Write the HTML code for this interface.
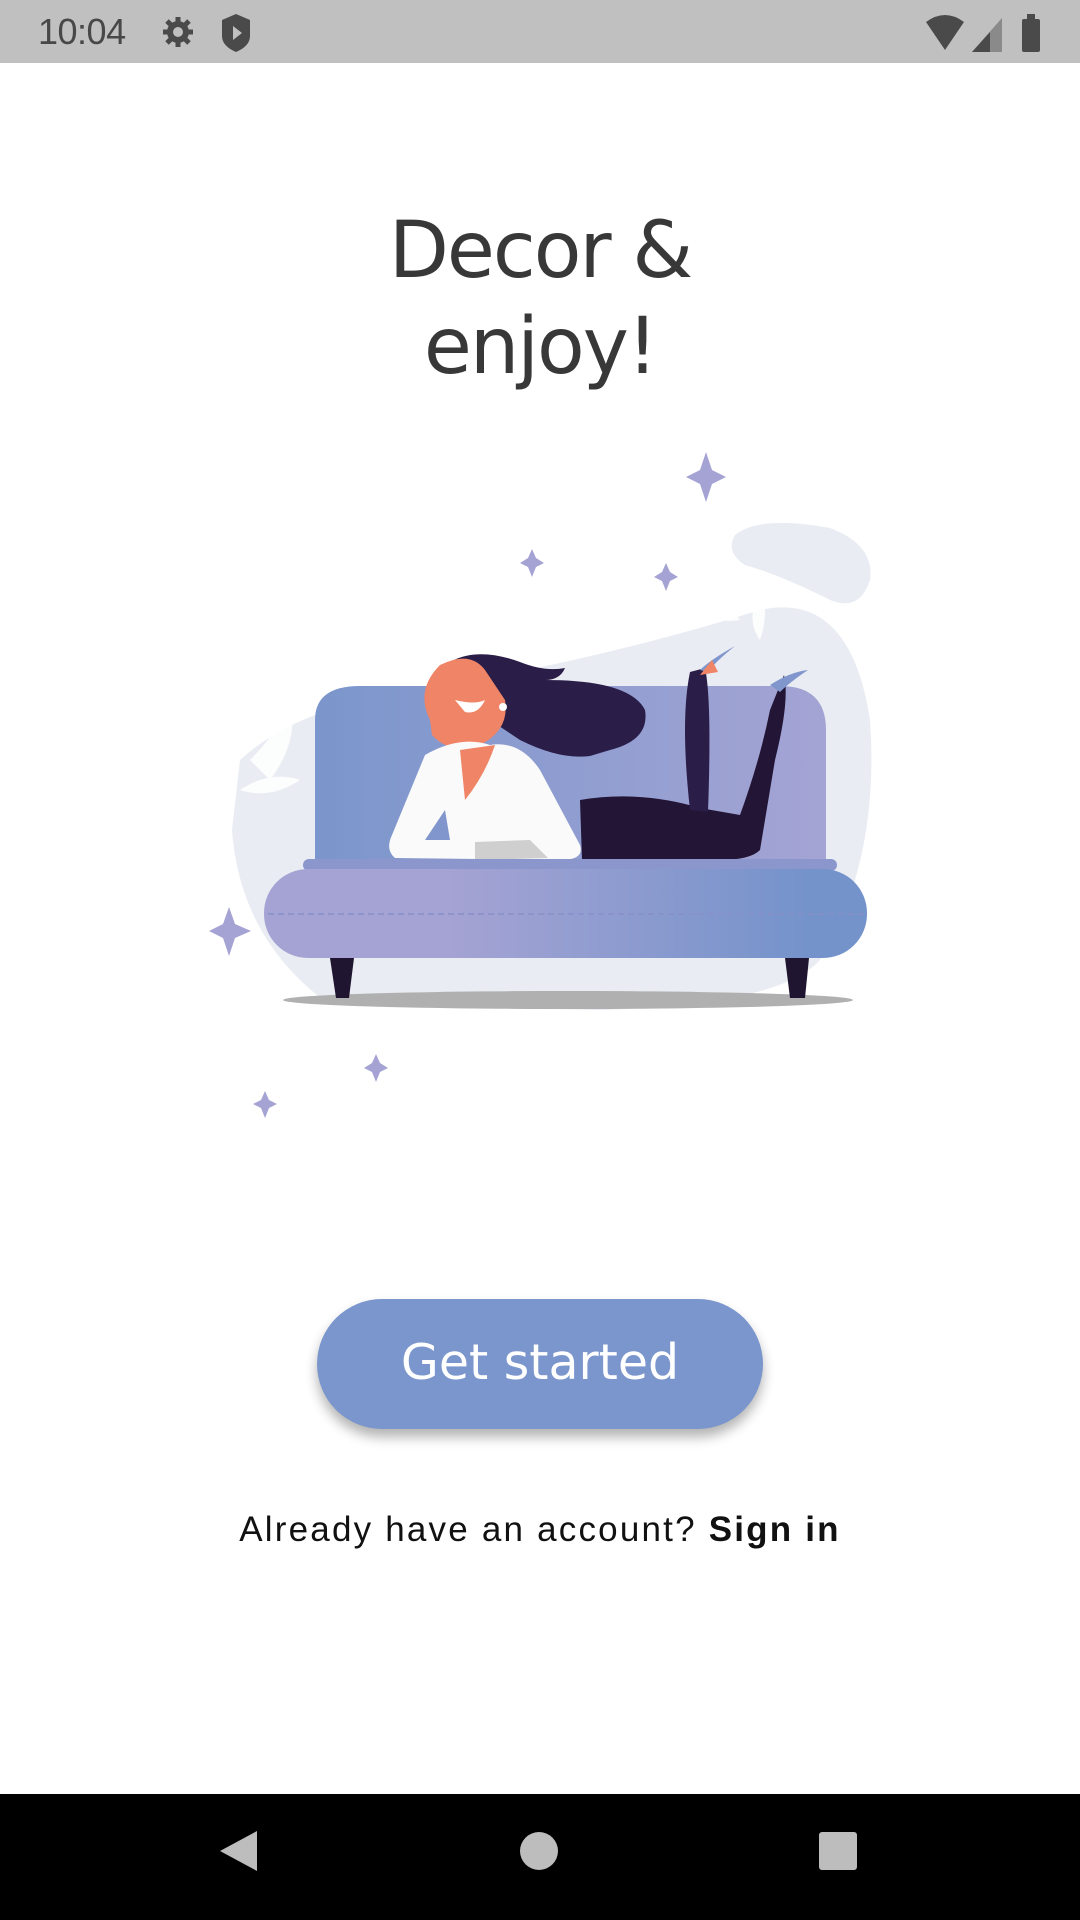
<!DOCTYPE html>
<html><head><meta charset="utf-8"><style>
html,body{margin:0;padding:0;width:1080px;height:1920px;background:#fff;overflow:hidden;position:relative;font-family:"Liberation Sans",sans-serif}
.sb{position:absolute;left:0;top:0;width:1080px;height:63px;background:#c0c0c0}
.time{position:absolute;left:38px;top:11px;font-size:36px;color:#484848;font-family:"Liberation Sans",sans-serif;letter-spacing:-0.5px}
.title{position:absolute;left:0;width:1080px;top:203px;text-align:center;font-family:"DejaVu Sans",sans-serif;font-size:78px;line-height:96px;color:#383838;letter-spacing:-2px}
.btn{position:absolute;left:317px;top:1299px;width:446px;height:130px;border-radius:65px;background:#7b96cc;box-shadow:0 8px 12px rgba(0,0,0,.3);color:#fff;font-family:"DejaVu Sans",sans-serif;font-size:49px;text-align:center;line-height:128px}
.acc{position:absolute;left:0;width:1080px;top:1510px;text-align:center;font-size:35px;letter-spacing:2.2px;color:#111}
.nav{position:absolute;left:0;top:1794px;width:1080px;height:126px;background:#000}
</style></head><body>
<div class="sb"><div class="time">10:04</div>
<svg width="1080" height="63" style="position:absolute;left:0;top:0">
<g fill="#4a4a4a">
<circle cx="178" cy="32" r="11"/>
<g stroke="#4a4a4a" stroke-width="5"><line x1="178" y1="17" x2="178" y2="47"/><line x1="163" y1="32" x2="193" y2="32"/><line x1="167" y1="21" x2="189" y2="43"/><line x1="189" y1="21" x2="167" y2="43"/></g>
<circle cx="178" cy="32" r="5" fill="#c0c0c0"/>
<path d="M222 20 L236 14 L250 20 L250 36 Q250 46 236 52 Q222 46 222 36 Z"/>
<path d="M233 26 L242 33 L233 40 Z" fill="#c0c0c0"/>
<path d="M926 22 Q945 8 964 22 L945 50 Z"/>
<path d="M972 52 L1002 18 L1002 52 Z" fill="#8a8a8a"/>
<path d="M972 52 L990 32 L990 52 Z"/>
<rect x="1022" y="19" width="18" height="33" rx="2"/><rect x="1027" y="14" width="8" height="6"/>
</g></svg></div>

<div class="title">Decor &amp;<br>enjoy!</div>

<svg width="1080" height="1920" style="position:absolute;left:0;top:0">
<defs>
<linearGradient id="bk" x1="0" x2="1"><stop offset="0" stop-color="#7b96cc"/><stop offset="1" stop-color="#a4a4d4"/></linearGradient>
<linearGradient id="st" x1="0" x2="1" y1="0" y2="0"><stop offset="0.3" stop-color="#a5a3d3"/><stop offset="0.9" stop-color="#7593cb"/></linearGradient>
</defs>
<path d="M240 760 Q300 705 420 690 Q600 660 760 610 Q850 590 870 720 Q880 860 820 960 Q780 1005 600 1010 L330 1005 Q240 940 232 830 Z" fill="#e9ecf2"/>
<path d="M735 535 Q760 515 830 528 Q875 545 870 580 Q860 612 830 600 Q780 575 745 565 Q725 552 735 535Z" fill="#e9ecf2"/>
<g fill="#fff" opacity=".9">
<path d="M250 760 Q280 730 290 700 Q300 740 270 780Z"/><path d="M240 790 Q270 770 300 780 Q270 800 240 790Z"/><path d="M250 730 Q270 710 285 720 Q265 740 250 730Z"/>
<path d="M690 600 Q720 590 740 620 Q710 625 690 600Z"/><path d="M760 640 Q770 610 760 590 Q745 620 760 640Z"/>
</g>
<g fill="#a5a3d3">
<path d="M706 452 L712 470 L726 477 L712 484 L706 502 L700 484 L686 477 L700 470Z"/>
<path d="M532 549 L536 558 L544 563 L536 567 L532 577 L528 567 L520 563 L528 558Z"/>
<path d="M666 563 L670 572 L678 577 L670 581 L666 591 L662 581 L654 577 L662 572Z"/>
<path d="M229 907 L235 924 L251 931 L235 938 L229 956 L223 938 L209 931 L223 924Z"/>
<path d="M376 1054 L380 1063 L388 1068 L380 1072 L376 1082 L372 1072 L364 1068 L372 1063Z"/>
<path d="M265 1091 L269 1100 L277 1104 L269 1108 L265 1118 L261 1108 L253 1104 L261 1100Z"/>
</g>
<ellipse cx="568" cy="1000" rx="285" ry="9" fill="#b0b0b0"/>
<path d="M330 958 L354 958 L349 998 L336 998Z" fill="#201530"/>
<path d="M785 958 L809 958 L805 998 L790 998Z" fill="#201530"/>
<path d="M315 720 Q315 686 360 686 L780 686 Q826 686 826 730 L826 863 L315 863Z" fill="url(#bk)"/>
<path d="M430 680 Q460 640 520 662 Q545 672 565 668 Q560 680 545 680 Q630 680 645 710 Q650 740 610 750 L590 756 Q560 760 520 740 Z" fill="#2a1e48"/>
<path d="M430 720 Q415 690 440 665 Q470 650 485 670 L505 700 Q510 730 480 745 Q450 755 432 735Z" fill="#f08466"/>
<path d="M455 700 Q475 705 485 700 Q478 715 465 712Z" fill="#fff"/>
<circle cx="503" cy="707" r="4" fill="#fff"/>
<path d="M425 755 Q460 735 490 745 Q520 740 540 770 L580 845 Q585 860 560 860 L395 858 Q385 850 392 835Z" fill="#fafafa"/>
<path d="M460 750 L495 745 Q485 775 465 800Z" fill="#f08466"/>
<path d="M425 840 L445 810 L450 840Z" fill="#8096cc"/>
<path d="M475 842 L530 840 L548 858 L475 860Z" fill="#cfcfcf"/>
<path d="M580 800 Q640 790 700 808 L740 815 Q760 760 770 710 L784 675 Q790 700 775 760 L760 850 Q750 860 720 860 L582 860Z" fill="#231535"/>
<path d="M690 810 Q680 720 690 672 L705 668 Q712 700 708 812Z" fill="#2a1e48"/>
<path d="M700 670 Q710 660 735 646 Q715 662 708 672Z" fill="#8096cc"/>
<path d="M770 685 Q790 672 808 670 Q790 682 780 692Z" fill="#8096cc"/>
<path d="M700 675 L712 660 L718 672Z" fill="#f08466"/>
<rect x="303" y="859" width="534" height="12" rx="6" fill="#8a96cc"/>
<rect x="264" y="869" width="603" height="89" rx="44" fill="url(#st)"/>
<line x1="268" y1="914" x2="864" y2="914" stroke="#8890c8" stroke-width="1.5" stroke-dasharray="6 4"/>
</svg>

<div class="btn">Get started</div>
<div class="acc">Already have an account? <b>Sign in</b></div>

<div class="nav"><svg width="1080" height="126">
<path d="M257 37 L257 77 L220 57Z" fill="#bdbdbd"/>
<circle cx="539" cy="57" r="19" fill="#bdbdbd"/>
<rect x="819" y="38" width="38" height="38" rx="3" fill="#bdbdbd"/>
</svg></div>
</body></html>
